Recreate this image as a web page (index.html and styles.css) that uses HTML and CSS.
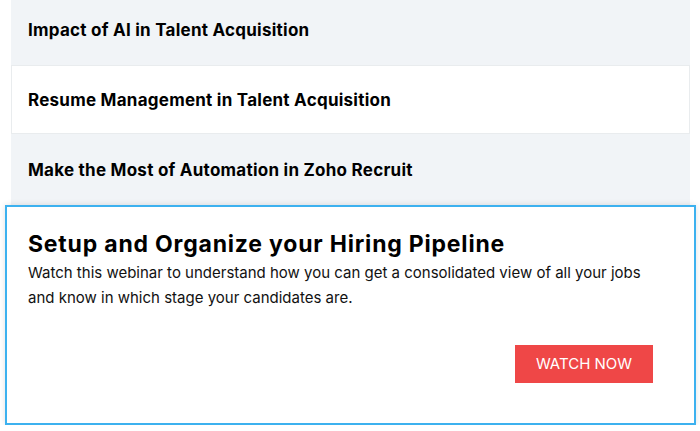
FILE: index.html
```html
<!DOCTYPE html>
<html lang="en">
<head>
    <meta charset="UTF-8">
    <title>Webinars</title>
    <link rel="stylesheet" href="styles.css">
</head>
<body>
<div id="webinars">
    <ul class="list">
        <li class="item item-first">Impact of AI in Talent Acquisition</li>
        <li class="item item-white">Resume Management in Talent Acquisition</li>
        <li class="item item-last">Make the Most of Automation in Zoho Recruit</li>
    </ul>
    <div class="card">
        <h2 class="card-title">Setup and Organize your Hiring Pipeline</h2>
        <p class="card-text">Watch this webinar to understand how you can get a consolidated view of all your jobs and know in which stage your candidates are.</p>
        <div class="card-foot"><a class="btn" href="#">WATCH NOW</a></div>
    </div>
</div>
</body>
</html>
```

FILE: styles.css
```css
html,body{margin:0;padding:0;background:#fff;}
body{font-family:Inter,"Liberation Sans",sans-serif;color:#000;overflow:hidden;}
ul,li,h2,p{margin:0;padding:0;}
.list{list-style-type:none;margin:0 10px 0 11px;}
.item{height:65px;display:flex;align-items:center;padding-left:17px;background:#f1f4f7;font-size:17px;font-weight:700;letter-spacing:0.25px;}
.item-first{height:59px;padding-bottom:6px;}
.item-white{height:67px;background:#fff;border:1px solid #e9ecee;padding-left:16px;}
.item-last{height:71px;}
.card{margin:0 4px 0 5px;border:2px solid #3cb1ef;background:#fff;box-shadow:0 0 6px rgba(0,0,0,.12);padding:22px 41px 0 21px;height:194px;}
.card-title{font-size:23px;font-weight:700;line-height:30px;letter-spacing:0.8px;}
.card-text{width:625px;font-size:15px;line-height:25px;margin-top:1px;color:#111;letter-spacing:0;}
.card-foot{display:flex;justify-content:flex-end;margin-top:35px;}
.btn{display:block;width:138px;height:38px;line-height:38px;text-align:center;background:#ef4747;color:#fff;font-size:15px;text-decoration:none;}
```
